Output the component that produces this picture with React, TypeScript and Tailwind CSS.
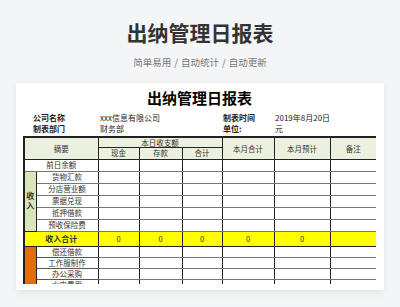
import React from 'react';

const font = { fontFamily: '"Noto Sans CJK SC", "Noto Sans", sans-serif' };

const incomeRows = ['货物汇款', '分店营业额', '票据兑现', '抵押借款', '预收保险费'];
const outRows = ['偿还借款', '工作服制作', '办公采购', '水电费用'];

const Empty: React.FC = () => (
  <>
    <td className="border-x border-x-[#222] border-y border-y-[#777]" />
    <td className="border-x border-x-[#222] border-y border-y-[#777]" />
    <td className="border-x border-x-[#222] border-y border-y-[#777]" />
    <td className="border-x border-x-[#222] border-y border-y-[#777]" />
    <td className="border-x border-x-[#222] border-y border-y-[#777]" />
    <td className="border-x border-x-[#222] border-y border-y-[#777]" />
  </>
);

// 出纳日报表 表格部分
const ReportTable: React.FC = () => (
  <table className="table-fixed border-collapse border-2 border-[#222] w-[353px] text-[7.5px] text-[#333] text-center leading-none">
    <colgroup>
      <col className="w-[12px]" />
      <col className="w-[62px]" />
      <col className="w-[41px]" />
      <col className="w-[43px]" />
      <col className="w-[40px]" />
      <col className="w-[52px]" />
      <col className="w-[56px]" />
      <col className="w-[47px]" />
    </colgroup>
    <tbody>
      <tr className="h-[10px] bg-[#ebf1de]">
        <td colSpan={2} rowSpan={2} className="border border-[#222]">摘要</td>
        <td colSpan={3} className="border border-[#222]">本日收支额</td>
        <td rowSpan={2} className="border border-[#222]">本月合计</td>
        <td rowSpan={2} className="border border-[#222]">本月预计</td>
        <td rowSpan={2} className="border border-[#222]">备注</td>
      </tr>
      <tr className="h-[12px] bg-[#ebf1de]">
        <td className="border border-[#222]">现金</td>
        <td className="border border-[#222]">存款</td>
        <td className="border border-[#222]">合计</td>
      </tr>
      <tr className="h-[12px]">
        <td colSpan={2} className="border-x border-x-[#222] border-y border-y-[#777]">前日余额</td>
        <Empty />
      </tr>
      {incomeRows.map((name, i) => (
        <tr key={name} className="h-[12px]">
          {i === 0 && (
            <td rowSpan={5} className="border border-[#222] bg-[#d8e4bc] font-bold text-[8px] leading-[10px]">
              收<br />入
            </td>
          )}
          <td className="border-x border-x-[#222] border-y border-y-[#777]">{name}</td>
          <Empty />
        </tr>
      ))}
      <tr className="h-[15px] bg-[#ffff00]">
        <td colSpan={2} className="border border-[#222] font-bold text-[8px]">收入合计</td>
        {[0, 0, 0, 0, 0].map((v, i) => (
          <td key={i} className="border border-[#222]">{v}</td>
        ))}
        <td className="border border-[#222]" />
      </tr>
      {outRows.map((name, i) => (
        <tr key={name} className="h-[11px]">
          {i === 0 && <td rowSpan={4} className="border border-[#222] bg-[#e26b0a]" />}
          <td className="border-x border-x-[#222] border-y border-y-[#555]">{name}</td>
          <Empty />
        </tr>
      ))}
    </tbody>
  </table>
);

export default function App() {
  return (
    <div className="w-[400px] h-[307px] bg-[#f4f5f7] overflow-hidden flex flex-col items-center" style={font}>
      <h1 className="mt-[20px] text-[21px] leading-[24px] font-bold text-[#333]">出纳管理日报表</h1>
      <p className="mt-[12px] text-[9.5px] leading-[12px] text-[#777] flex">
        <span>简单易用</span>
        <span className="mx-[3px]">/</span>
        <span>自动统计</span>
        <span className="mx-[3px]">/</span>
        <span>自动更新</span>
      </p>

      <div className="mt-[15px] w-[368px] h-[207px] bg-white shadow-[0_2px_8px_rgba(0,0,0,0.08)] flex flex-col pl-[7px] pr-[8px] pb-[6px]">
        <div className="mt-[6px] text-center text-[15px] leading-[18px] font-bold text-black">出纳管理日报表</div>

        <div className="mt-[5px] text-[8px] text-[#222]">
          <div className="flex h-[11px] items-center">
            <span className="w-[77px] pl-[10px] font-bold">公司名称</span>
            <span className="w-[123px]">xxx信息有限公司</span>
            <span className="w-[52px] font-bold">制表时间</span>
            <span>2019年8月20日</span>
          </div>
          <div className="flex h-[11px] items-center">
            <span className="w-[77px] pl-[10px] font-bold">制表部门</span>
            <span className="w-[123px]">财务部</span>
            <span className="w-[52px] font-bold">单位:</span>
            <span>元</span>
          </div>
        </div>

        <div className="mt-[2px] flex-1 overflow-hidden">
          <ReportTable />
        </div>
      </div>
    </div>
  );
}
